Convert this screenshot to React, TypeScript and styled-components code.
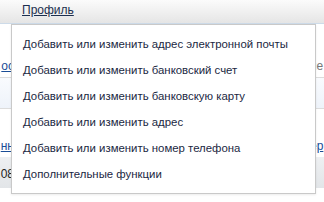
import React from "react";
import styled, { createGlobalStyle } from "styled-components";

const GlobalStyle = createGlobalStyle`
  html, body {
    margin: 0;
    padding: 0;
    background: #ffffff;
    font-family: "Liberation Sans", Arial, sans-serif;
  }
`;

const Page = styled.div`
  position: relative;
  width: 324px;
  height: 202px;
  overflow: hidden;
  background: #fff;
`;

const TopBar = styled.div`
  height: 23px;
  display: flex;
  align-items: center;
  padding-left: 22px;
  background: linear-gradient(#fbfbfb, #e5e5e5);
  border-bottom: 1px solid #cddbe9;
`;

const NavLink = styled.a`
  font-size: 12px;
  color: #1c2f4f;
  text-decoration: underline;
  line-height: 15px;
  margin-top: -2px;
`;

const Row = styled.div<{ $h: number; $bg?: string; $line?: boolean }>`
  height: ${(p) => p.$h}px;
  display: flex;
  justify-content: space-between;
  align-items: flex-end;
  background: ${(p) => p.$bg || "#fff"};
  border-bottom: ${(p) => (p.$line ? "1px solid #dcdcdc" : "none")};
`;

const Cell = styled.div<{ $pad?: number }>`
  width: 14px;
  display: flex;
  justify-content: flex-end;
  padding-bottom: ${(p) => p.$pad ?? 4}px;
  font-size: 12px;
  white-space: nowrap;
`;

const RightCell = styled(Cell)`
  justify-content: flex-start;
`;

const BgLink = styled.span`
  color: #1a4d96;
  text-decoration: underline;
`;

const BgText = styled.span<{ $c?: string }>`
  color: ${(p) => p.$c || "#222"};
`;

const Menu = styled.ul`
  position: absolute;
  top: 24px;
  left: 11px;
  width: 303px;
  margin: 0;
  padding: 6px 0;
  list-style: none;
  background: #fff;
  border: 1px solid #c9c9c9;
  box-shadow: 0 1px 2px rgba(0, 0, 0, 0.08);
`;

const Item = styled.li`
  height: 26px;
  display: flex;
  align-items: center;
  padding-left: 11px;
  font-size: 11.4px;
  color: #1a2742;
  white-space: nowrap;
`;

const items = [
  "Добавить или изменить адрес электронной почты",
  "Добавить или изменить банковский счет",
  "Добавить или изменить банковскую карту",
  "Добавить или изменить адрес",
  "Добавить или изменить номер телефона",
  "Дополнительные функции",
];

export default function App() {
  return (
    <Page>
      <GlobalStyle />
      <TopBar>
        <NavLink>Профиль</NavLink>
      </TopBar>
      <Row $h={53} $line>
        <Cell $pad={4}>
          <BgLink>ос</BgLink>
        </Cell>
        <RightCell $pad={4}>
          <BgText $c="#777">пе</BgText>
        </RightCell>
      </Row>
      <Row $h={30} $bg="linear-gradient(#f9fbfe, #eef3fa)" $line />
      <Row $h={48}>
        <Cell $pad={4}>
          <BgLink>нн</BgLink>
        </Cell>
        <RightCell $pad={4}>
          <BgLink>ер</BgLink>
        </RightCell>
      </Row>
      <Row $h={31} $bg="linear-gradient(#eef0f2, #e2e5e8)">
        <Cell $pad={7}>
          <BgText>08</BgText>
        </Cell>
      </Row>
      <Menu>
        {items.map((t) => (
          <Item key={t}>{t}</Item>
        ))}
      </Menu>
    </Page>
  );
}
